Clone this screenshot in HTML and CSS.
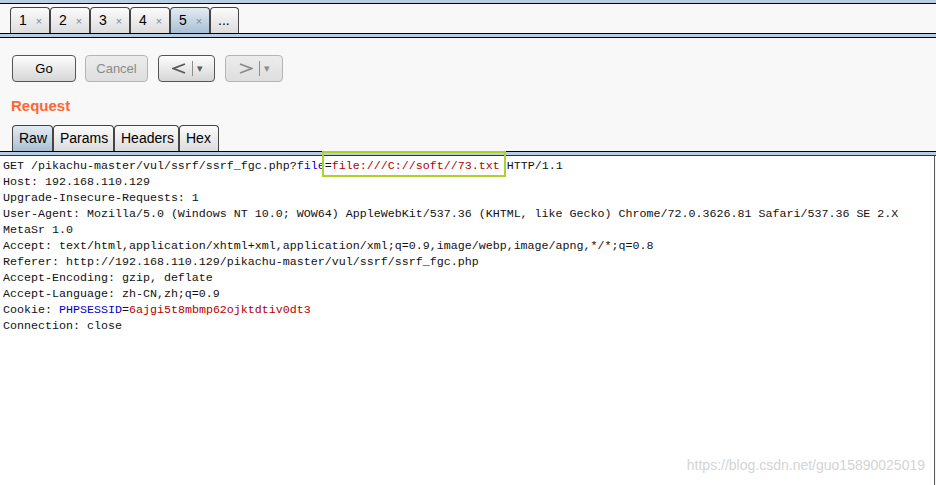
FILE: index.html
```html
<!DOCTYPE html>
<html>
<head>
<meta charset="utf-8">
<title>Repeater</title>
<link rel="stylesheet" href="styles.css">
</head>
<body>
<div class="topStrip"></div>
<div class="tabBar">
  <span class="tab">1<i>×</i></span>
  <span class="tab">2<i>×</i></span>
  <span class="tab">3<i>×</i></span>
  <span class="tab">4<i>×</i></span>
  <span class="tab active">5<i>×</i></span>
  <span class="tab more">...</span>
</div>
<div class="tabUnder"></div>
<div class="panel">
  <div class="btnRow">
    <button type="button" class="btn btnGo">Go</button>
    <button type="button" class="btn btnCancel" disabled>Cancel</button>
    <button type="button" class="btn btnNav">
      <svg width="14" height="11" viewBox="0 0 14 11"><polyline points="13,1 1.5,5.5 13,10" fill="none" stroke="#5a5a5a" stroke-width="1.8"/></svg>
      <span class="sep"></span><span class="drop">▾</span>
    </button>
    <button type="button" class="btn btnNav off">
      <svg width="14" height="11" viewBox="0 0 14 11"><polyline points="1,1 12.5,5.5 1,10" fill="none" stroke="#8c8c8c" stroke-width="1.8"/></svg>
      <span class="sep"></span><span class="drop">▾</span>
    </button>
  </div>
  <h2 class="title">Request</h2>
  <div class="subTabs">
    <span class="subTab active">Raw</span>
    <span class="subTab">Params</span>
    <span class="subTab">Headers</span>
    <span class="subTab">Hex</span>
  </div>
</div>
<div class="subUnder"></div>
<div class="editor">
<pre>GET /pikachu-master/vul/ssrf/ssrf_fgc.php?<span class="pname">file</span><span class="hl">=<span class="pval">file:///C://soft//73.txt</span></span> HTTP/1.1
Host: 192.168.110.129
Upgrade-Insecure-Requests: 1
User-Agent: Mozilla/5.0 (Windows NT 10.0; WOW64) AppleWebKit/537.36 (KHTML, like Gecko) Chrome/72.0.3626.81 Safari/537.36 SE 2.X
MetaSr 1.0
Accept: text/html,application/xhtml+xml,application/xml;q=0.9,image/webp,image/apng,*/*;q=0.8
Referer: http://192.168.110.129/pikachu-master/vul/ssrf/ssrf_fgc.php
Accept-Encoding: gzip, deflate
Accept-Language: zh-CN,zh;q=0.9
Cookie: <span class="pname">PHPSESSID</span>=<span class="pval">6ajgi5t8mbmp62ojktdtiv0dt3</span>
Connection: close</pre>
  <div class="mark">https://blog.csdn.net/guo15890025019</div>
</div>
</body>
</html>
```

FILE: styles.css
```css
html,body {
  margin: 0;
  padding: 0;
  width: 100%;
  height: 100%;
  overflow: hidden;
  background: #f8f8f8;
  font-family: "Liberation Sans", Arial, sans-serif;
  font-size: 13px;
  color: #000;
}
body {
  display: flex;
  flex-direction: column;
}
.topStrip {
  height: 3px;
  background: #b9cde2;
  border-bottom: 1px solid #000;
}
.tabBar {
  height: 29px;
  display: flex;
  align-items: flex-end;
  padding-left: 10px;
  border-bottom: 1px solid #000;
}
.tab {
  box-sizing: border-box;
  width: 40px;
  height: 26px;
  line-height: 24px;
  padding-left: 8px;
  border: 1px solid #444;
  border-bottom: none;
  border-radius: 4px 4px 0 0;
  background: linear-gradient(#fbfbfb, #dcdcdc);
  font-size: 14px;
}
.tab i {
  font-style: normal;
  font-size: 11px;
  color: #888;
  margin-left: 9px;
}
.tab.active {
  background: linear-gradient(#e4ebf2, #a9bfd3);
}
.tab.more {
  width: 29px;
  padding-left: 7px;
}
.tabUnder {
  height: 3px;
  background: #b9cde2;
  border-bottom: 1px solid #000;
}
.panel {
  padding: 17px 0 0 12px;
}
.btnRow {
  display: flex;
  gap: 9px;
}
.btn {
  box-sizing: border-box;
  height: 27px;
  width: 64px;
  border: 1px solid #555;
  border-radius: 4px;
  background: linear-gradient(#fdfdfd, #d6d6d6);
  font-family: "Liberation Sans", Arial, sans-serif;
  font-size: 13px;
  color: #000;
  padding: 0;
}
.btnCancel {
  width: 63px;
  border-color: #b4b4b4;
  background: linear-gradient(#ececec, #dedede);
  color: #8a8a8a;
}
.btnNav {
  width: 57px;
  margin-left: 1px;
  display: flex;
  align-items: center;
  padding-left: 13px;
}
.btnNav.off {
  width: 58px;
  border-color: #b4b4b4;
  background: linear-gradient(#ececec, #dedede);
}
.off .drop {
  color: #8c8c8c;
}
.sep {
  width: 1px;
  height: 15px;
  background: #8c8c8c;
  margin: 0 4px 0 6px;
}
.drop {
  font-size: 11px;
  color: #5a5a5a;
}
.title {
  margin: 14px 0 0 -1px;
  height: 20px;
  line-height: 20px;
  font-size: 15px;
  font-weight: bold;
  color: #ff6633;
}
.subTabs {
  display: flex;
  margin-top: 9px;
}
.subTab {
  box-sizing: border-box;
  height: 26px;
  line-height: 25px;
  padding: 0 6px;
  border: 1px solid #444;
  border-bottom: none;
  border-radius: 4px 4px 0 0;
  background: linear-gradient(#fbfbfb, #dcdcdc);
  font-size: 14px;
}
.subTab:nth-child(1) { width: 41px; }
.subTab:nth-child(2) { width: 61px; }
.subTab:nth-child(3) { width: 65px; }
.subTab:nth-child(4) { width: 40px; }
.subTab.active {
  background: linear-gradient(#e4ebf2, #a9bfd3);
}
.subUnder {
  height: 3px;
  background: #b9cde2;
  border-top: 1px solid #000;
  border-bottom: 1px solid #333;
}
.editor {
  position: relative;
  flex: 1;
  width: 935px;
  box-sizing: border-box;
  background: #fff;
  border-right: 1px solid #555;
}
.editor pre {
  margin: 0;
  padding: 2px 0 0 3px;
  font-family: "Liberation Mono", "Courier New", monospace;
  font-size: 11.67px;
  line-height: 16px;
  color: #111;
}
.pname {
  color: #0000c8;
}
.pval {
  color: #b00000;
}
.hl {
  position: relative;
}
.hl::after {
  content: "";
  position: absolute;
  left: -3px;
  right: -6px;
  top: -8px;
  bottom: -4px;
  border: 2px solid #aed02b;
}
.mark {
  position: absolute;
  right: 9px;
  bottom: 12px;
  font-size: 14px;
  color: #d4d4d4;
}
```
